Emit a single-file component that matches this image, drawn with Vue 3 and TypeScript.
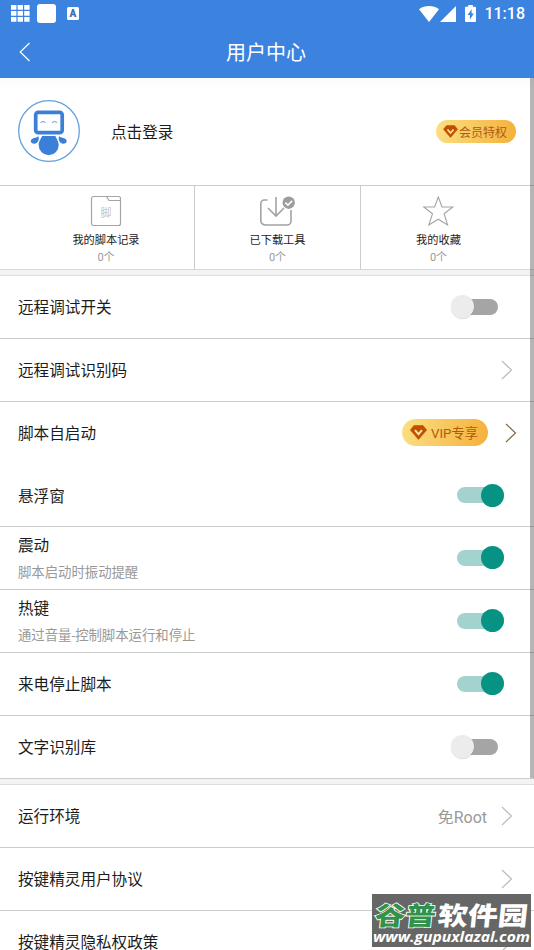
<script setup lang="ts">
interface Stat {
  icon: 'script' | 'download' | 'star'
  label: string
  count: number
}

interface Row {
  label: string
  hint?: string
  toggle?: boolean
  value?: string
  vip?: boolean
  plain?: boolean
  short?: boolean
}

const stats: Stat[] = [
  { icon: 'script', label: '我的脚本记录', count: 0 },
  { icon: 'download', label: '已下载工具', count: 0 },
  { icon: 'star', label: '我的收藏', count: 0 },
]

const groups: Row[][] = [
  [
    { label: '远程调试开关', toggle: false },
    { label: '远程调试识别码' },
    { label: '脚本自启动', vip: true, plain: true },
    { label: '悬浮窗', toggle: true, short: true },
    { label: '震动', hint: '脚本启动时振动提醒', toggle: true },
    { label: '热键', hint: '通过音量-控制脚本运行和停止', toggle: true },
    { label: '来电停止脚本', toggle: true },
    { label: '文字识别库', toggle: false },
  ],
  [
    { label: '运行环境', value: '免Root' },
    { label: '按键精灵用户协议' },
    { label: '按键精灵隐私权政策' },
  ],
]
</script>

<template>
  <div class="screen">
    <header class="top">
      <div class="status">
        <svg class="apps" width="19" height="17" viewBox="0 0 19 17" fill="#fff">
          <path d="M0 0h5.4v4.8H0zM6.6 0H12v4.8H6.6zM13.2 0h5.4v4.8h-5.4zM0 6h5.4v4.8H0zM6.600 6H12v4.800H6.600zM13.200 6h5.400v4.800h-5.400zM0 12h5.400v4.800H0zM6.600 12H12v4.800H6.600zM13.200 12h5.400v4.800h-5.400z" />
        </svg>
        <span class="blank"></span>
        <span class="letter">A</span>
        <div class="system">
          <svg width="20" height="16" viewBox="0 0 20 16" fill="#fff"><path d="M0 3.200C5.500-1 14.500-1 20 3.200L10 16z" /></svg>
          <svg class="signal" width="16" height="16" viewBox="0 0 16 16" fill="#fff"><path d="M16 0v16H0z" /></svg>
          <svg class="battery" width="11" height="17" viewBox="0 0 11 17">
            <path fill="#fff" d="M3.200 0h4.600v1.700H10a1 1 0 0 1 1 1V16a1 1 0 0 1-1 1H1a1 1 0 0 1-1-1V2.700a1 1 0 0 1 1-1h2.200z" />
            <path fill="#3b83df" d="M6.600 4.300 2.600 10h2.300v4.400l4-6H6.600z" />
          </svg>
          <span class="clock">11:18</span>
        </div>
      </div>
      <div class="bar">
        <svg class="back" width="12" height="20" viewBox="0 0 12 20" fill="none" stroke="#fff" stroke-width="1.200"><path d="M10.500 1 1.200 10l9.300 9" /></svg>
        <h1>用户中心</h1>
      </div>
    </header>

    <section class="profile">
      <svg class="avatar" width="62" height="62" viewBox="0 0 62 62">
        <circle cx="31" cy="31" r="30.300" fill="#fff" stroke="#62a0df" stroke-width="1.300" />
        <rect x="17.700" y="12.300" width="26.500" height="20.400" rx="2.500" fill="#fff" stroke="#3b7fd8" stroke-width="3.700" />
        <path d="M22.500 22.500q2.500-2 5 0M34 22.500q2.500-2 5 0" fill="none" stroke="#6496cf" stroke-width="1" />
        <path fill="#3b7fd8" d="M24 36h13.500c.5 2.500 3.200 4.500 3.200 9.200a10 10 0 0 1-20 0c0-4.700 2.800-6.700 3.300-9.200zM20.500 36.300c1 3.700-.6 7.400-4.300 7.400-3.400 0-4.300-3-2.300-4.700 1.700-1.500 4.300-1 6.600-2.700zM41 36.300c-1 3.700.6 7.400 4.300 7.400 3.400 0 4.300-3 2.300-4.700-1.700-1.500-4.300-1-6.600-2.700z" />
      </svg>
      <span class="login">点击登录</span>
      <span class="pill member">
        <svg width="15" height="13" viewBox="0 0 17 15"><path fill="#c05000" d="M4 .5h9L16.700 5 8.500 14.500.3 5z" stroke="#c05000" stroke-linejoin="round" stroke-width=".6" /><path d="m5 5.200 3.500 4 3.500-4" fill="none" stroke="#ffe3a0" stroke-width="2" /></svg>
        会员特权
      </span>
    </section>

    <section class="stats">
      <div v-for="stat in stats" :key="stat.icon" class="stat">
        <svg v-if="stat.icon === 'script'" width="36" height="32" viewBox="0 0 36 32" fill="none" stroke="#a5a5a5" stroke-width="1.200">
          <path d="M5.500 1.500h25a2 2 0 0 1 2 2v25a2 2 0 0 1-2 2h-25a2 2 0 0 1-2-2v-25a2 2 0 0 1 2-2zM18.500 1.500l2.500 4h11.500" />
          <text x="18" y="21.500" text-anchor="middle" class="glyph">脚</text>
        </svg>
        <svg v-else-if="stat.icon === 'download'" width="36" height="32" viewBox="0 0 36 32" fill="none" stroke="#a3a3a3" stroke-width="1.600">
          <path d="M7.500 5H4.300A3.500 3.500 0 0 0 .8 8.500v17A4.500 4.500 0 0 0 5.300 30H27a4 4 0 0 0 4-4V15M16 2v18.500M8 13l8 8 8-8" />
          <circle cx="28.700" cy="7.700" r="6.200" fill="#9d9d9d" stroke="none" />
          <path d="m25.300 7.700 2.600 2.500 4.200-4.300" stroke="#fff" />
        </svg>
        <svg v-else width="36" height="32" viewBox="0 0 36 32" fill="none" stroke="#a5a5a5" stroke-width="1.100">
          <path d="m17.300 2 3.700 10h10.800l-8.700 6.700 3.500 11.300-9.300-5.800L7.800 30l3.700-11.300L2.800 12h10.800z" />
        </svg>
        <span class="stat-label">{{ stat.label }}</span>
        <span class="stat-count">{{ stat.count }}个</span>
      </div>
    </section>

    <section v-for="(group, g) in groups" :key="g" class="group">
      <div v-for="row in group" :key="row.label" class="row" :class="{ plain: row.plain, short: row.short }">
        <div class="text">
          <span class="label">{{ row.label }}</span>
          <span v-if="row.hint" class="hint">{{ row.hint }}</span>
        </div>
        <span v-if="row.toggle !== undefined" class="switch" :class="{ on: row.toggle }"><i></i></span>
        <template v-else>
          <span v-if="row.value" class="value">{{ row.value }}</span>
          <span v-if="row.vip" class="pill vip">
            <svg width="17" height="15" viewBox="0 0 17 15"><path fill="#c05000" d="M4 .5h9L16.700 5 8.500 14.500.3 5z" stroke="#c05000" stroke-linejoin="round" stroke-width=".6" /><path d="m5 5.200 3.500 4 3.500-4" fill="none" stroke="#ffe3a0" stroke-width="2" /></svg>
            VIP专享
          </span>
          <svg class="chevron" :class="{ dark: row.vip }" width="12" height="20" viewBox="0 0 12 20" fill="none"><path d="m1 1 9.500 9L1 19" /></svg>
        </template>
      </div>
    </section>

    <div class="scrollbar"></div>

    <svg class="watermark" width="159" height="53" viewBox="0 0 159 53">
      <rect width="159" height="53" fill="#666" />
      <g class="brand" transform="translate(0 31) skewX(-6)">
        <text x="2" y="0" textLength="61" lengthAdjust="spacingAndGlyphs" class="green">谷普</text>
        <text x="65" y="0" textLength="90" lengthAdjust="spacingAndGlyphs" class="white">软件园</text>
      </g>
      <text x="1" y="48" textLength="157" lengthAdjust="spacingAndGlyphs" class="url">www.gupuxlazal.com</text>
    </svg>
  </div>
</template>

<style>
body {
  overflow: hidden;
}
</style>

<style scoped>
.screen {
  position: relative;
  width: 534px;
  height: 950px;
  overflow: hidden;
  background: #fff;
  font-family: Roboto, "Noto Sans CJK SC", sans-serif;
  color: #1c1c1c;
}
.top {
  height: 78px;
  background: #3b83df;
  color: #fff;
}
.status {
  display: flex;
  align-items: center;
  height: 27px;
  padding: 0 9px 0 11px;
}
.blank {
  width: 19px;
  height: 19px;
  margin-left: 7px;
  border-radius: 3px;
  background: #fff;
}
.letter {
  width: 12px;
  height: 13px;
  margin-left: 11px;
  border-radius: 1.5px;
  background: #fff;
  color: #3c6db5;
  font-size: 10px;
  font-weight: 900;
  line-height: 13px;
  text-align: center;
}
.system {
  display: flex;
  align-items: center;
  margin-left: auto;
}
.signal {
  margin-left: 1px;
}
.battery {
  margin-left: 9px;
}
.clock {
  margin-left: 8px;
  font-size: 16px;
  font-weight: 500;
  line-height: 27px;
}
.bar {
  position: relative;
  display: flex;
  align-items: center;
  justify-content: center;
  height: 51px;
}
.back {
  position: absolute;
  left: 19px;
  top: 15px;
}
h1 {
  margin: 0 2px 0 0;
  padding-top: 2px;
  font-size: 20px;
  font-weight: 400;
  line-height: 51px;
}
.profile {
  display: flex;
  align-items: center;
  box-sizing: border-box;
  height: 108px;
  padding: 0 18px 1px;
  border-bottom: 1px solid #ccc;
  background: linear-gradient(#fafbfe, #fff 10px);
}
.login {
  margin-left: 31px;
  padding-bottom: 1px;
  font-size: 15.600px;
}
.pill {
  display: flex;
  align-items: center;
  box-sizing: border-box;
  border-radius: 14px;
  background: linear-gradient(100deg, #fbe083, #f5b03a);
  color: #b25a0c;
  white-space: nowrap;
}
.member {
  width: 80px;
  height: 23px;
  margin-left: auto;
  padding-left: 7px;
  gap: 1px;
  font-size: 12px;
}
.vip {
  width: 86px;
  height: 27px;
  margin-right: 17px;
  padding-left: 8px;
  gap: 4px;
  font-size: 13.300px;
}
.stats {
  display: grid;
  grid-template-columns: 177px 166px 1fr;
  height: 83px;
  padding: 0 18px;
  border-bottom: 1px solid #d8d8d8;
}
.stat {
  display: flex;
  flex-direction: column;
  align-items: center;
  padding-top: 9px;
  border-right: 1px solid #ccc;
}
.stat:last-child {
  border-right: 0;
}
.stat-label {
  margin-top: 5px;
  font-size: 11.200px;
  line-height: 18px;
}
.stat-count {
  font-size: 11px;
  line-height: 16px;
  color: #999;
}
.glyph {
  font-size: 11px;
  font-weight: 300;
  fill: #aaa;
  stroke: none;
}
.group {
  padding-top: 5px;
  background: linear-gradient(#f3f3f3, #f3f3f3) top / 100% 5px no-repeat;
}
.group::before {
  content: '';
  display: block;
  height: 1px;
  background: #ddd;
}
.row {
  display: flex;
  align-items: center;
  box-sizing: border-box;
  height: 63px;
  padding: 0 21px 1px 18px;
  border-bottom: 1px solid #ccc;
}
.row.plain {
  border-bottom-color: transparent;
}
.row.plain .chevron {
  margin-right: -4px;
}
.row.short {
  height: 62px;
}
.text {
  display: flex;
  flex-direction: column;
  flex: 1;
  padding-top: 3px;
}
.label {
  font-size: 15.600px;
  line-height: 24px;
}
.hint {
  margin-top: 4px;
  font-size: 13.370px;
  line-height: 22px;
  color: #999;
}
.value {
  margin-right: 14px;
  font-size: 16px;
  color: #999;
}
.chevron {
  stroke: #bbb;
  stroke-width: 1.200;
}
.chevron.dark {
  stroke: #806b45;
}
.switch {
  display: flex;
  align-items: center;
  box-sizing: border-box;
  width: 42px;
  height: 16px;
  margin-right: 15px;
  border-radius: 8px;
  background: #a5a5a5;
}
.switch i {
  flex: none;
  width: 23px;
  height: 23px;
  margin-left: -5px;
  border-radius: 50%;
  background: #ececec;
  box-shadow: 0 1px 1px #0002;
}
.switch.on {
  justify-content: flex-end;
  width: 47px;
  margin-right: 9px;
  background: #a4d3cf;
}
.switch.on i {
  background: #069384;
  box-shadow: none;
}
.scrollbar {
  position: absolute;
  top: 78px;
  right: 0;
  width: 4px;
  height: 700px;
  background: rgba(70, 70, 70, 0.4);
}
.watermark {
  position: absolute;
  left: 372px;
  top: 894px;
}
.brand {
  font-family: "Noto Sans CJK SC", sans-serif;
  font-size: 25.500px;
  font-weight: 900;
}
.green {
  fill: #33924a;
  stroke: #fff;
  stroke-width: 1.600;
  paint-order: stroke;
}
.white {
  fill: #fff;
}
.url {
  font-family: "Open Sans", sans-serif;
  font-size: 15px;
  font-style: italic;
  font-weight: 700;
  fill: #fff;
}
</style>
